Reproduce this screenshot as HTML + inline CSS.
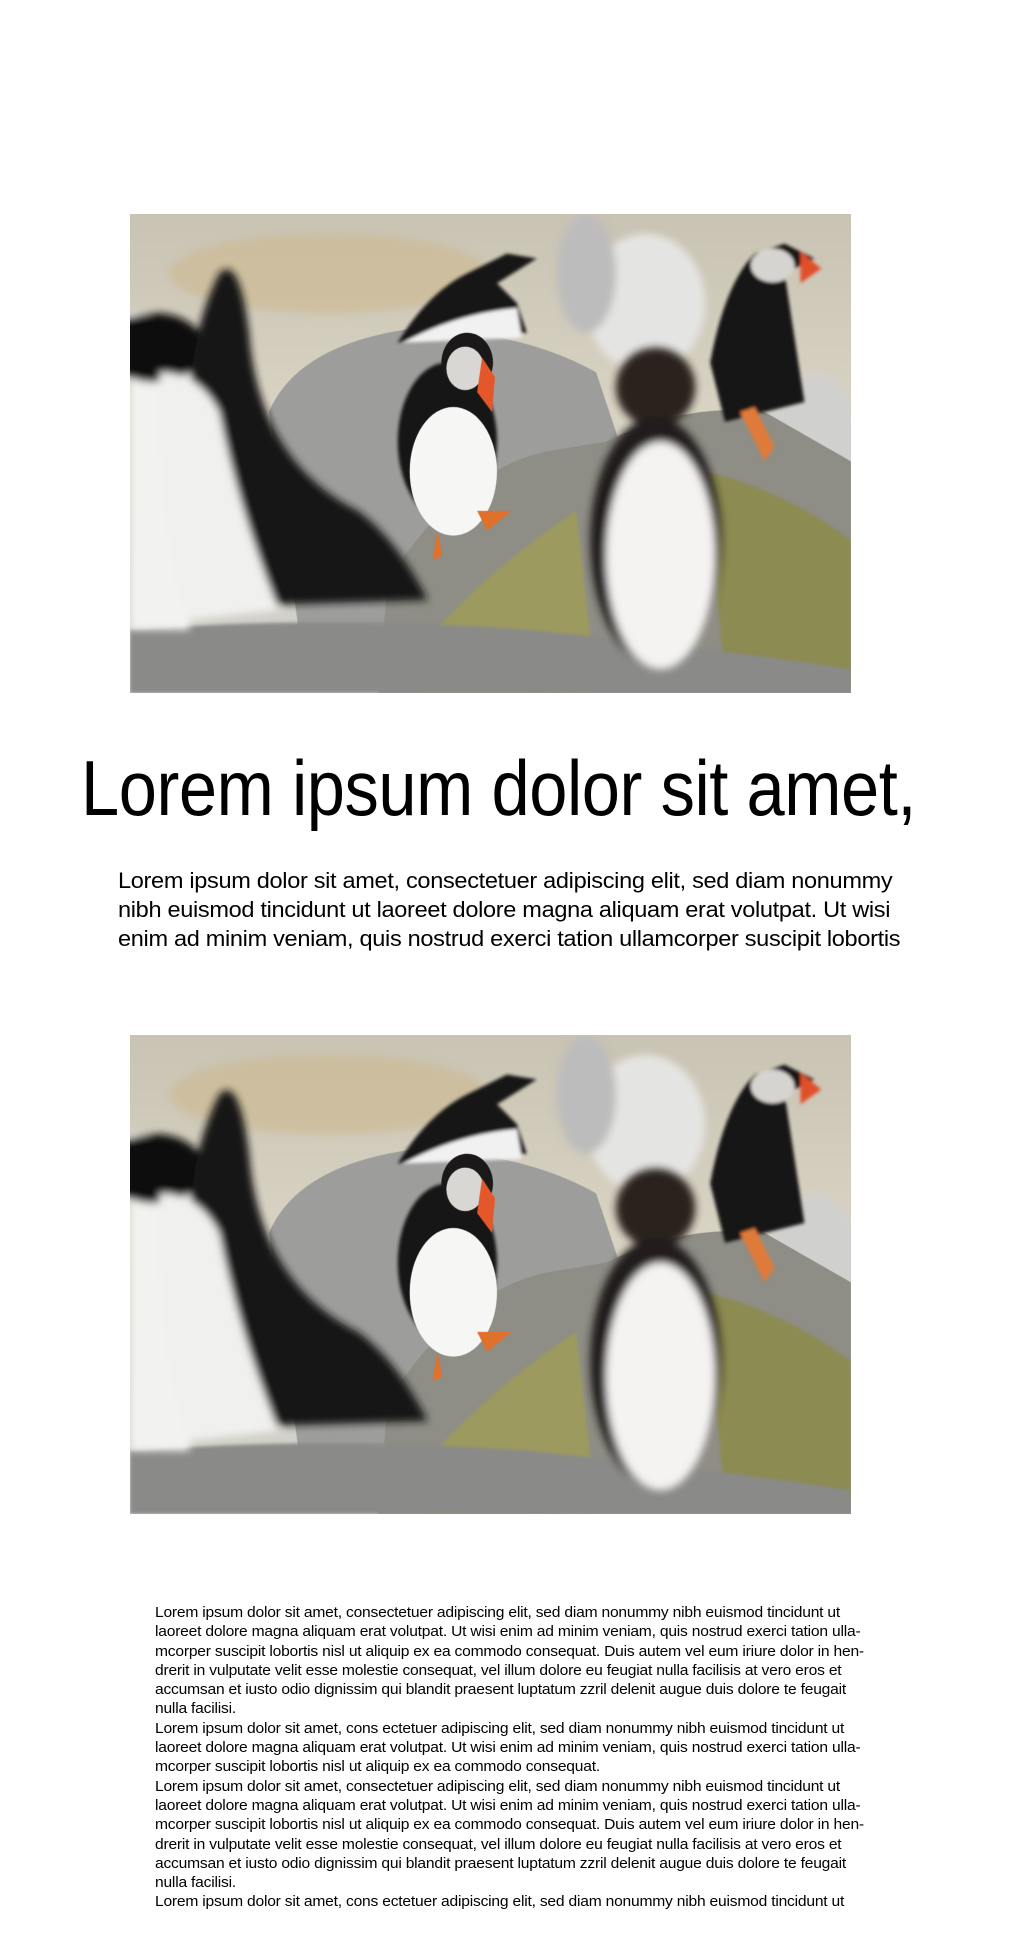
<!DOCTYPE html>
<html><head><meta charset="utf-8"><style>
html,body{margin:0;padding:0;background:#fff;}
body{width:1024px;height:1939px;position:relative;overflow:hidden;font-family:"Liberation Sans",sans-serif;color:#000;}
.img{position:absolute;left:130px;width:721px;height:479px;overflow:hidden;}
h1{position:absolute;left:81px;top:738px;margin:0;font-weight:normal;font-size:78px;line-height:100px;white-space:nowrap;transform:scaleX(0.88);transform-origin:left top;letter-spacing:-0.5px;}
.p1{position:absolute;left:118px;top:866px;font-size:22px;line-height:29.2px;white-space:nowrap;transform:scaleX(1.07);transform-origin:left top;letter-spacing:-0.3px;}
.p2{position:absolute;left:155px;top:1603px;font-size:15px;line-height:19.3px;white-space:nowrap;transform:scaleX(1.04);transform-origin:left top;letter-spacing:-0.2px;}
</style></head><body>
<svg width="0" height="0" style="position:absolute">
<defs>
<linearGradient id="bg" x1="0" y1="0" x2="0" y2="1"><stop offset="0" stop-color="#c9c3b3"/><stop offset="0.4" stop-color="#d8d2c2"/><stop offset="1" stop-color="#cfcfcc"/></linearGradient>
<filter id="b4"><feGaussianBlur stdDeviation="4"/></filter>
<filter id="b2"><feGaussianBlur stdDeviation="1.5"/></filter>
<g id="scene">
<rect width="727" height="484" fill="url(#bg)"/>
<g filter="url(#b4)">
<ellipse cx="200" cy="60" rx="160" ry="40" fill="#cbb88e" opacity="0.6"/>
<ellipse cx="520" cy="90" rx="60" ry="70" fill="#e4e4e2"/>
<ellipse cx="460" cy="60" rx="30" ry="60" fill="#bcbcbc"/>
<ellipse cx="690" cy="250" rx="50" ry="90" fill="#d0d0ce"/>
</g>
<path d="M140 200 Q170 130 290 115 Q400 120 470 160 L500 250 L480 400 L170 420 Z" fill="#9d9e9b"/>
<path d="M260 370 Q330 260 420 240 L480 230 Q560 190 640 200 L727 250 L727 484 L250 484 Z" fill="#8e8e86"/>
<path d="M300 430 Q360 360 450 300 L470 480 L300 484 Z" fill="#a39f52" opacity="0.75" filter="url(#b2)"/>
<path d="M580 260 Q660 280 727 330 L727 470 L600 470 Z" fill="#8c8a3a" opacity="0.7" filter="url(#b2)"/>
<path d="M0 420 Q200 405 400 420 Q600 440 727 460 L727 484 L0 484 Z" fill="#8a8a88" filter="url(#b2)"/>
<g filter="url(#b2)">
<path d="M270 130 Q300 80 340 60 L380 40 L410 45 L370 70 L390 90 L400 120 L300 125 Z" fill="#161414"/>
<path d="M275 130 Q330 100 390 95 L395 125 Z" fill="#f1f1f1"/>
<path d="M585 150 Q600 70 630 40 L660 30 L690 45 L660 60 L680 190 L600 210 Z" fill="#171515"/>
<ellipse cx="648" cy="52" rx="22" ry="17" fill="#d6d4d0"/>
<path d="M676 38 L697 55 L676 70 Z" fill="#e0502c"/>
<path d="M615 200 L640 250 L650 235 L630 195 Z" fill="#e07a3a"/>
</g>
<ellipse cx="320" cy="230" rx="50" ry="80" fill="#141212" filter="url(#b2)"/>
<ellipse cx="326" cy="260" rx="44" ry="65" fill="#f6f6f4"/>
<ellipse cx="340" cy="150" rx="26" ry="30" fill="#1a1818"/>
<ellipse cx="338" cy="156" rx="19" ry="22" fill="#d9d7d3"/>
<path d="M355 145 L368 165 L365 200 L350 180 Z" fill="#e4572a"/>
<path d="M310 320 L305 350 L315 345 Z M350 300 L360 320 L385 300 Z" fill="#e0712c"/>
<g filter="url(#b4)">
<ellipse cx="530" cy="175" rx="40" ry="40" fill="#2a201c"/>
<ellipse cx="530" cy="330" rx="66" ry="125" fill="#231d1a"/>
<ellipse cx="535" cy="345" rx="55" ry="115" fill="#f4f3f1"/>
<path d="M0 100 Q40 95 60 120 L60 420 L0 420 Z" fill="#f2f2f0"/>
<ellipse cx="25" cy="135" rx="50" ry="35" fill="#111"/>
<path d="M90 60 Q110 40 120 120 Q130 250 230 300 Q270 330 300 390 L140 395 Q70 300 60 200 Q60 120 90 60 Z" fill="#141212"/>
<path d="M30 160 Q70 160 90 200 Q110 300 150 400 L60 410 Q30 330 30 160 Z" fill="#f0f0ee"/>
</g>
</g>
</defs></svg>
<div class="img" style="top:214px"><svg width="721" height="479" viewBox="0 0 727 484" preserveAspectRatio="none"><use href="#scene"/></svg></div>
<h1>Lorem ipsum dolor sit amet,</h1>
<div class="p1">Lorem ipsum dolor sit amet, consectetuer adipiscing elit, sed diam nonummy<br>nibh euismod tincidunt ut laoreet dolore magna aliquam erat volutpat. Ut wisi<br>enim ad minim veniam, quis nostrud exerci tation ullamcorper suscipit lobortis</div>
<div class="img" style="top:1035px"><svg width="721" height="479" viewBox="0 0 727 484" preserveAspectRatio="none"><use href="#scene"/></svg></div>
<div class="p2">Lorem ipsum dolor sit amet, consectetuer adipiscing elit, sed diam nonummy nibh euismod tincidunt ut<br>laoreet dolore magna aliquam erat volutpat. Ut wisi enim ad minim veniam, quis nostrud exerci tation ulla-<br>mcorper suscipit lobortis nisl ut aliquip ex ea commodo consequat. Duis autem vel eum iriure dolor in hen-<br>drerit in vulputate velit esse molestie consequat, vel illum dolore eu feugiat nulla facilisis at vero eros et<br>accumsan et iusto odio dignissim qui blandit praesent luptatum zzril delenit augue duis dolore te feugait<br>nulla facilisi.<br>Lorem ipsum dolor sit amet, cons ectetuer adipiscing elit, sed diam nonummy nibh euismod tincidunt ut<br>laoreet dolore magna aliquam erat volutpat. Ut wisi enim ad minim veniam, quis nostrud exerci tation ulla-<br>mcorper suscipit lobortis nisl ut aliquip ex ea commodo consequat.<br>Lorem ipsum dolor sit amet, consectetuer adipiscing elit, sed diam nonummy nibh euismod tincidunt ut<br>laoreet dolore magna aliquam erat volutpat. Ut wisi enim ad minim veniam, quis nostrud exerci tation ulla-<br>mcorper suscipit lobortis nisl ut aliquip ex ea commodo consequat. Duis autem vel eum iriure dolor in hen-<br>drerit in vulputate velit esse molestie consequat, vel illum dolore eu feugiat nulla facilisis at vero eros et<br>accumsan et iusto odio dignissim qui blandit praesent luptatum zzril delenit augue duis dolore te feugait<br>nulla facilisi.<br>Lorem ipsum dolor sit amet, cons ectetuer adipiscing elit, sed diam nonummy nibh euismod tincidunt ut</div>
</body></html>
